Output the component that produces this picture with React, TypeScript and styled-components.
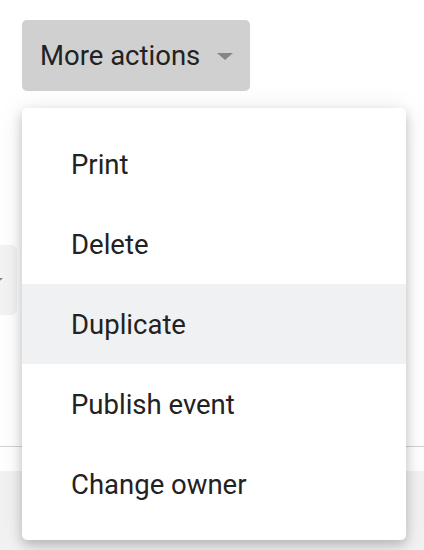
import styled, { createGlobalStyle } from "styled-components";

const GlobalStyle = createGlobalStyle`
  html, body {
    margin: 0;
    padding: 0;
    background: #ffffff;
    font-family: Roboto, "Liberation Sans", Arial, sans-serif;
  }
`;

const Page = styled.div`
  position: relative;
  width: 424px;
  height: 550px;
  overflow: hidden;
  display: flex;
  flex-direction: column;
`;

const TriggerButton = styled.button`
  align-self: flex-start;
  margin: 20px 0 0 22px;
  height: 71px;
  padding: 0 17px 0 18px;
  display: flex;
  align-items: center;
  gap: 17px;
  border: none;
  border-radius: 5px;
  background: #cfd0cf;
  color: #222222;
  font-family: inherit;
  font-size: 27.5px;
  cursor: pointer;
`;

const Caret = styled.span`
  width: 0;
  height: 0;
  border-left: 8px solid transparent;
  border-right: 8px solid transparent;
  border-top: 7px solid #858585;
  margin-top: 2px;
`;

const BackRow = styled.div`
  margin-top: 154px;
  height: 70px;
  display: flex;
`;

const GhostButton = styled.div`
  width: 80px;
  margin-left: -63px;
  border-radius: 6px;
  background: #f3f3f3;
  display: flex;
  align-items: center;
  justify-content: flex-end;
  padding-right: 14px;
  box-sizing: border-box;
`;

const Divider = styled.div`
  margin-top: 131px;
  height: 1px;
  background: #d2d2d2;
`;

const Footer = styled.div`
  margin-top: 24px;
  flex: 1;
  background: #f2f2f2;
`;

const Menu = styled.ul`
  position: absolute;
  top: 108px;
  left: 22px;
  width: 384px;
  margin: 0;
  padding: 16px 0;
  list-style: none;
  background: #ffffff;
  border-radius: 5px;
  box-shadow: 0 5px 12px rgba(0, 0, 0, 0.22), 0 2px 30px rgba(0, 0, 0, 0.08);
`;

const MenuItem = styled.li<{ $active?: boolean }>`
  height: 80px;
  display: flex;
  align-items: center;
  padding-left: 49px;
  font-size: 27.5px;
  color: #222222;
  background: ${(p) => (p.$active ? "#f0f1f2" : "transparent")};
  cursor: pointer;
`;

const items = ["Print", "Delete", "Duplicate", "Publish event", "Change owner"];

export default function App() {
  return (
    <Page>
      <GlobalStyle />
      <TriggerButton>
        More actions
        <Caret />
      </TriggerButton>
      <BackRow>
        <GhostButton>
          <Caret />
        </GhostButton>
      </BackRow>
      <Divider />
      <Footer />
      <Menu>
        {items.map((label) => (
          <MenuItem key={label} $active={label === "Duplicate"}>
            {label}
          </MenuItem>
        ))}
      </Menu>
    </Page>
  );
}
